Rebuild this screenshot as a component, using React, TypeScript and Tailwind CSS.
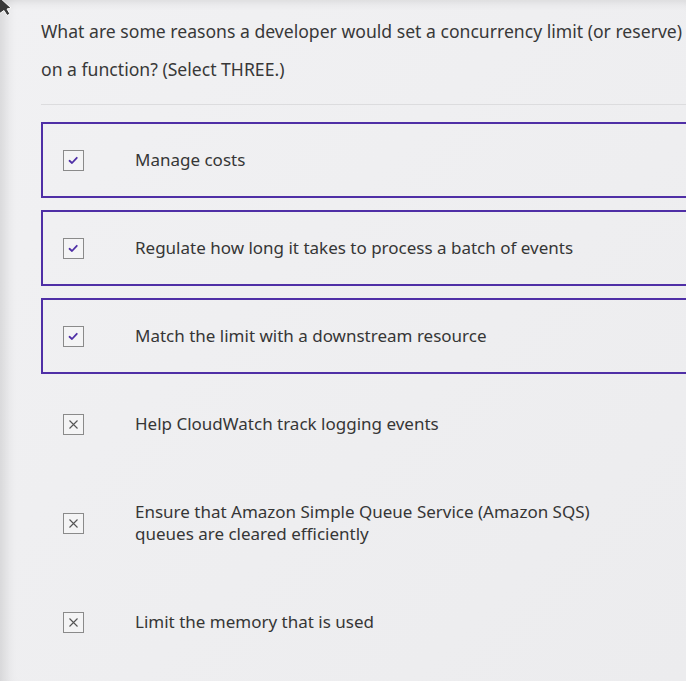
const options = [
  { text: "Manage costs", checked: true },
  { text: "Regulate how long it takes to process a batch of events", checked: true },
  { text: "Match the limit with a downstream resource", checked: true },
  { text: "Help CloudWatch track logging events", checked: false },
  {
    text: "Ensure that Amazon Simple Queue Service (Amazon SQS) queues are cleared efficiently",
    checked: false,
  },
  { text: "Limit the memory that is used", checked: false },
];

function Box({ checked }: { checked: boolean }) {
  return (
    <span className="flex h-[21px] w-[21px] shrink-0 items-center justify-center border border-[#8a8a8a] bg-[#f4f4f5]">
      {checked ? (
        <svg width="19" height="19" viewBox="0 0 19 19" fill="none">
          <path d="M5.5 9.8 L8 12 L12.8 6.8" stroke="#4f2fa6" strokeWidth="1.8" strokeLinecap="round" strokeLinejoin="round" />
        </svg>
      ) : (
        <svg width="19" height="19" viewBox="0 0 19 19" fill="none">
          <path d="M5.5 5.5 L13.5 13.5 M13.5 5.5 L5.5 13.5" stroke="#555" strokeWidth="1.1" />
        </svg>
      )}
    </span>
  );
}

export default function App() {
  return (
    <div
      className="relative min-h-[681px] w-[686px] overflow-hidden bg-gradient-to-br from-[#f1f1f3] to-[#ececee] shadow-[inset_16px_0_14px_-12px_rgba(0,0,0,0.13),inset_0_10px_10px_-8px_rgba(0,0,0,0.1)]"
      style={{ fontFamily: '"Noto Sans", "Open Sans", sans-serif' }}
    >
      {/* mouse pointer */}
      <svg className="absolute left-0 top-0" width="14" height="18" viewBox="0 0 14 18">
        <path d="M-2 -4 L11 8 L7 9 L10 14 L7 15.5 L4 10.5 L-1 14 Z" fill="#3a3a3a" stroke="#fff" strokeWidth="1" />
      </svg>

      <div className="pl-[41px] pt-[12px]">
        <p className="w-[642px] text-[17.6px] leading-[38px] text-[#383838]">
          What are some reasons a developer would set a concurrency limit (or reserve) on a function? (Select THREE.)
        </p>
        <div className="mt-[16px] mb-[17px] h-px w-[700px] bg-[#dcdcde]" />

        <div className="flex w-[700px] flex-col gap-[12px]">
          {options.map((o) => (
            <div
              key={o.text}
              className={`flex items-center border-2 py-[25px] pl-[20px] ${
                o.checked ? "border-[#4f2fa6]" : "border-transparent"
              }`}
            >
              <Box checked={o.checked} />
              <span className="ml-[51px] w-[490px] text-[17px] leading-[22px] text-[#363636]">{o.text}</span>
            </div>
          ))}
        </div>
      </div>
    </div>
  );
}
